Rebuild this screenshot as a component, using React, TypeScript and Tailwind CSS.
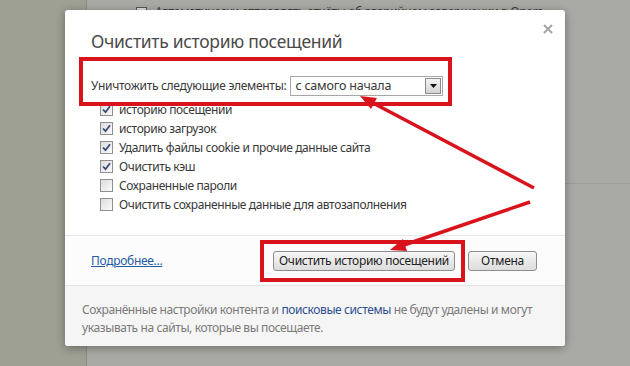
import React from 'react';

const items = [
  { label: 'историю посещений', checked: true },
  { label: 'историю загрузок', checked: true },
  { label: 'Удалить файлы cookie и прочие данные сайта', checked: true },
  { label: 'Очистить кэш', checked: true },
  { label: 'Сохраненные пароли', checked: false },
  { label: 'Очистить сохраненные данные для автозаполнения', checked: false },
];

function Checkbox({ checked }: { checked: boolean }) {
  return (
    <span className="w-[13px] h-[13px] shrink-0 border border-[#8e8f8f] bg-gradient-to-br from-[#dcdcdc] to-[#fbfbfb] flex items-center justify-center">
      {checked && (
        <svg width="9" height="9" viewBox="0 0 9 9">
          <path d="M1 4.5 L3.5 7.2 L8 1.2" fill="none" stroke="#3a4a78" strokeWidth="1.8" />
        </svg>
      )}
    </span>
  );
}

export default function App() {
  return (
    <div
      className="relative w-[630px] h-[366px] overflow-hidden flex"
      style={{ fontFamily: '"Noto Sans", "Open Sans", sans-serif' }}
    >
      {/* Backdrop page */}
      <div className="w-[86px] bg-[#9da093]" />
      <div className="flex-1 bg-[#a9aaa5] border-l border-[#8b8d85] flex flex-col">
        <div className="flex items-center gap-2 pl-[49px] pt-[3px] text-[12px] tracking-[-0.4px] text-[#3d3d3d] whitespace-nowrap">
          <span className="w-[11px] h-[11px] border border-[#555] bg-[#ddd]" />
          <span className="w-[387px] overflow-hidden">Автоматически отправлять отчёты об аварийном завершении в Opera</span>
        </div>
        <div className="mt-auto mb-[182px] border-t border-[#9a9b96]" />
      </div>

      {/* Dialog */}
      <div className="absolute left-[65px] top-[10px] w-[500px] h-[336px] bg-white rounded-[3px] shadow-[0_2px_10px_rgba(0,0,0,0.35)] flex flex-col text-[12px] text-[#383838]">
        <div className="flex justify-end pt-[14px] pr-[12px]">
          <svg width="10" height="10" viewBox="0 0 10 10">
            <path d="M1 1 L9 9 M9 1 L1 9" stroke="#a4a4a4" strokeWidth="2" />
          </svg>
        </div>
        <div className="pl-[26px] -mt-[5px] text-[17.5px] leading-[24px] text-[#4a4a4a] tracking-[-0.3px]">
          Очистить историю посещений
        </div>

        <div className="flex items-center pl-[26px] mt-[23px] h-[20px]">
          <span className="tracking-[-0.3px]">Уничтожить следующие элементы:</span>
          <div className="ml-[4px] w-[153px] h-[20px] border border-[#a7a7a7] flex items-center justify-between bg-white">
            <span className="pl-[4px] text-[12.5px] tracking-[-0.2px]">с самого начала</span>
            <span className="w-[16px] h-[16px] mr-[1px] border border-[#8a8a8a] bg-gradient-to-b from-[#f4f4f4] to-[#d2d2d2] flex items-center justify-center">
              <svg width="7" height="4" viewBox="0 0 7 4">
                <path d="M0 0 H7 L3.5 4 Z" fill="#111" />
              </svg>
            </span>
          </div>
        </div>

        <div className="flex flex-col pl-[35px] mt-[7px] gap-[6px]">
          {items.map((it) => (
            <div key={it.label} className="flex items-center gap-[6px] h-[13px] tracking-[-0.4px] whitespace-nowrap">
              <Checkbox checked={it.checked} />
              <span>{it.label}</span>
            </div>
          ))}
        </div>

        <div className="mt-[24px] flex-1 border-t border-[#e6e6e6] bg-[#fcfcfc] flex items-center pl-[26px] pr-[28px]">
          <span className="text-[#1f5aa6] underline tracking-[-0.3px]">Подробнее...</span>
          <div className="ml-auto flex gap-[13px]">
            <button className="h-[20px] w-[182px] border border-[#8d8d8d] rounded-[3px] bg-gradient-to-b from-[#f6f6f6] to-[#dddddd] text-[12px] tracking-[-0.3px] text-[#222] leading-none whitespace-nowrap">
              Очистить историю посещений
            </button>
            <button className="h-[20px] w-[69px] border border-[#8d8d8d] rounded-[3px] bg-gradient-to-b from-[#f6f6f6] to-[#dddddd] text-[12px] tracking-[-0.3px] text-[#222] leading-none">
              Отмена
            </button>
          </div>
        </div>

        <div className="h-[61px] border-t border-[#e3e3e3] bg-[#f5f5f5] rounded-b-[3px] pl-[17px] pt-[15px] text-[12px] leading-[18px] text-[#7a7a7a] tracking-[-0.4px] whitespace-nowrap">
          Сохранённые настройки контента и <span className="text-[#2c4f92]">поисковые системы</span> не будут удалены и могут
          <br />
          указывать на сайты, которые вы посещаете.
        </div>
      </div>

      {/* Annotations */}
      <div className="absolute left-[79px] top-[57px] w-[373px] h-[49px] border-[4px] border-[#d8131c]" />
      <div className="absolute left-[260px] top-[240px] w-[205px] h-[42px] border-[4px] border-[#d8131c]" />
      <svg className="absolute left-0 top-0" width="630" height="366" viewBox="0 0 630 366">
        <line x1="534" y1="188" x2="373" y2="103" stroke="#d8131c" strokeWidth="3.5" />
        <polygon points="360,96 377,98 371,109" fill="#d8131c" />
        <line x1="530" y1="202" x2="404" y2="245" stroke="#d8131c" strokeWidth="3.5" />
        <polygon points="390,250 407,251 403,239" fill="#d8131c" />
      </svg>
    </div>
  );
}
